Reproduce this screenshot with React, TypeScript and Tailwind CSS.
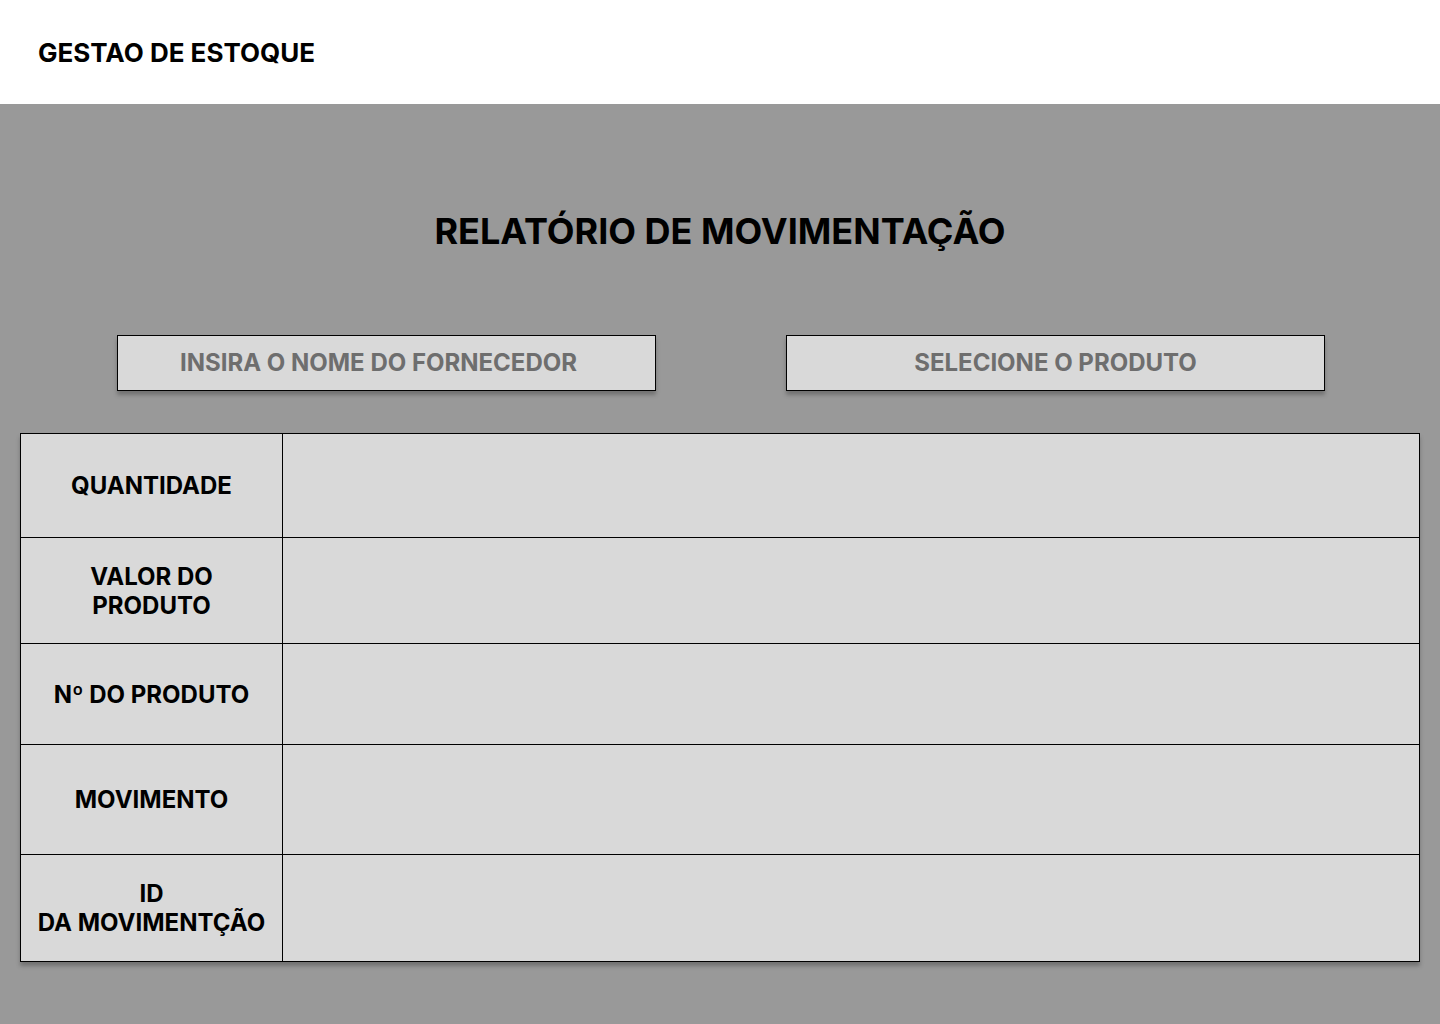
const rows = [
  { label: ["QUANTIDADE"], h: "h-[104px]" },
  { label: ["VALOR DO", "PRODUTO"], h: "h-[106px]" },
  { label: ["Nº DO PRODUTO"], h: "h-[101px]" },
  { label: ["MOVIMENTO"], h: "h-[110px]" },
  { label: ["ID", "DA MOVIMENTÇÃO"], h: "h-[106px]" },
];

export default function App() {
  return (
    <div className="w-[1440px] h-[1024px] flex flex-col bg-[#999999] font-['Inter','Liberation_Sans',sans-serif]">
      {/* Header */}
      <header className="h-[104px] bg-white flex items-center px-[38px] shrink-0">
        <h1 className="text-[26px] font-bold text-black">GESTAO DE ESTOQUE</h1>
      </header>

      <main className="flex flex-col items-center">
        <h2 className="mt-[101px] text-[36px] leading-[52px] font-bold text-black">
          RELATÓRIO DE MOVIMENTAÇÃO
        </h2>

        {/* Filters */}
        <div className="mt-[78px] w-full flex justify-between pl-[117px] pr-[115px]">
          <div className="w-[539px] h-[56px] border border-black bg-[#d9d9d9] shadow-[0_4px_4px_rgba(0,0,0,0.25)] flex items-center justify-center pr-[16px]">
            <span className="text-[24px] font-bold text-[#6e6e6e]">INSIRA O NOME DO FORNECEDOR</span>
          </div>
          <div className="w-[539px] h-[56px] border border-black bg-[#d9d9d9] shadow-[0_4px_4px_rgba(0,0,0,0.25)] flex items-center justify-center">
            <span className="text-[24px] font-bold text-[#6e6e6e]">SELECIONE O PRODUTO</span>
          </div>
        </div>

        {/* Table */}
        <div className="mt-[42px] ml-[20px] mr-[20px] self-stretch border border-black bg-[#d9d9d9] shadow-[0_4px_4px_rgba(0,0,0,0.25)] flex flex-col">
          {rows.map((r, i) => (
            <div
              key={i}
              className={`${r.h} flex ${i < rows.length - 1 ? "border-b border-black" : ""}`}
            >
              <div className="w-[262px] shrink-0 border-r border-black flex flex-col items-center justify-center">
                {r.label.map((l) => (
                  <span key={l} className="text-[24px] leading-[29px] font-bold text-black">
                    {l}
                  </span>
                ))}
              </div>
              <div className="flex-1" />
            </div>
          ))}
        </div>
      </main>
    </div>
  );
}
